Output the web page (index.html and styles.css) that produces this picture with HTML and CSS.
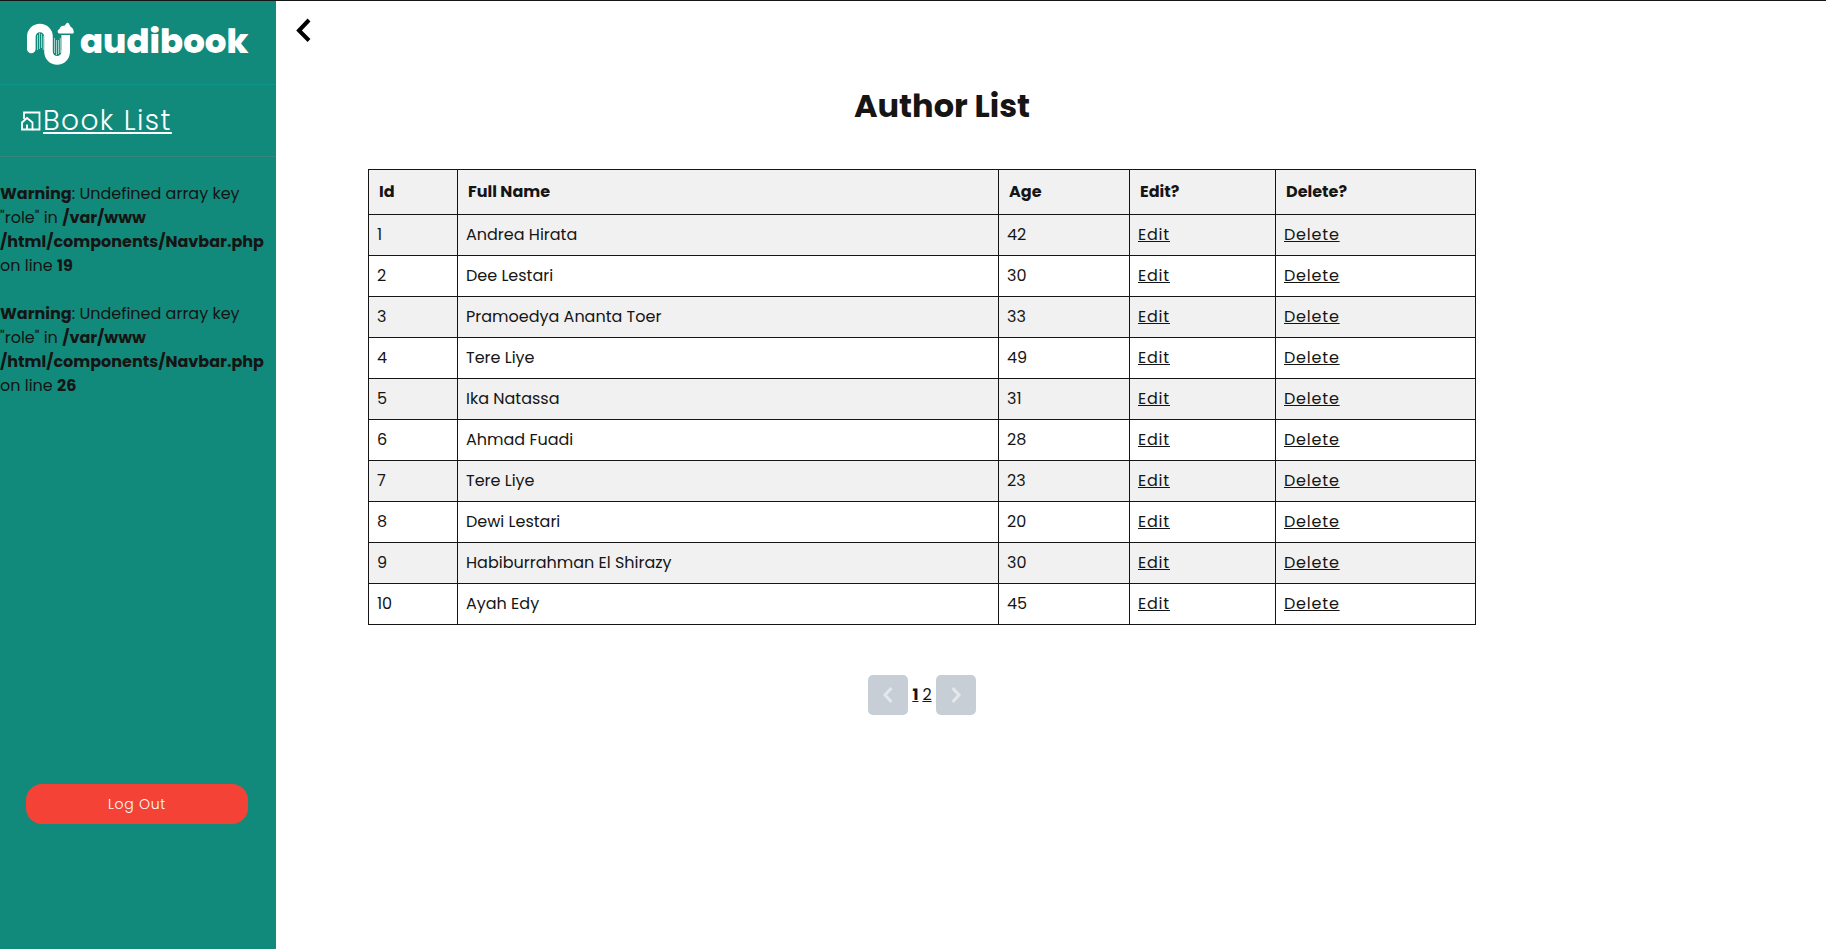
FILE: index.html
```html
<!DOCTYPE html>
<html lang="en">
<head>
<meta charset="utf-8">
<title>Author List</title>
<link rel="stylesheet" href="styles.css">
</head>
<body>
<div class="app">
  <aside class="sidebar">
    <div class="brand">
      <svg class="brand-mark" width="48" height="44" viewBox="26 22 48 44" fill="none" aria-hidden="true">
        <path d="M31.3 49V36.6a8.6 8.6 0 0 1 17.2 0V51.8a8.6 8.6 0 0 0 17.2 0" stroke="#fff" stroke-width="8.6" stroke-linecap="round"/>
        <path d="M65.7 52V35" stroke="#fff" stroke-width="8.6"/>
        <path d="M59.500 33.500a2 2 0 0 1-1.300-3.400l1.800-1.800c.2-2 2.200-3.100 4.500-2.500L66.500 23.200c.8-.8 2-.5 2.500.5l1.800 3.200c2 .5 2.800 3.300 3 5 .1 1-.5 1.600-1.500 1.600z" fill="#fff"/>
        <path d="M37.500 35v15M39.500 33v16M41.500 34v14M43.300 36v14M54.500 38v15M56.500 40v15M58.500 40v14M60.300 38v15" stroke="#fff" stroke-opacity=".6" stroke-width="1"/>
      </svg>
      <span class="brand-name">audibook</span>
    </div>
    <nav class="nav">
      <svg width="20" height="20" viewBox="0 0 20 20" fill="none" stroke="#fff" stroke-width="1.800" aria-hidden="true">
        <path d="M3 8V1.500h15.500v17h-7"/>
        <path d="M1 18.500v-7L6 7l5.500 4.500v7zM6 18v-4.500"/>
      </svg>
      <a class="nav-link" href="#">Book List</a>
    </nav>
    <p class="warning"><b>Warning</b>: Undefined array key<br>"role" in <b>/var/www<br>/html/components/Navbar.php</b><br>on line <b>19</b></p>
    <p class="warning"><b>Warning</b>: Undefined array key<br>"role" in <b>/var/www<br>/html/components/Navbar.php</b><br>on line <b>26</b></p>
    <button class="logout" type="button">Log Out</button>
  </aside>
  <main class="main">
    <button class="back" type="button" aria-label="Back">
      <svg width="16" height="24" viewBox="0 0 16 24" fill="none" stroke="#000" stroke-width="4"><path d="M13 2L3 12.500l10 10"/></svg>
    </button>
    <div class="content">
      <h1 class="title">Author List</h1>
      <table class="authors">
        <colgroup><col class="col-id"><col class="col-name"><col class="col-age"><col class="col-edit"><col class="col-delete"></colgroup>
        <thead><tr><th>Id</th><th>Full Name</th><th>Age</th><th>Edit?</th><th>Delete?</th></tr></thead>
        <tbody>
          <tr><td>1</td><td>Andrea Hirata</td><td>42</td><td><a href="#">Edit</a></td><td><a href="#">Delete</a></td></tr>
          <tr><td>2</td><td>Dee Lestari</td><td>30</td><td><a href="#">Edit</a></td><td><a href="#">Delete</a></td></tr>
          <tr><td>3</td><td>Pramoedya Ananta Toer</td><td>33</td><td><a href="#">Edit</a></td><td><a href="#">Delete</a></td></tr>
          <tr><td>4</td><td>Tere Liye</td><td>49</td><td><a href="#">Edit</a></td><td><a href="#">Delete</a></td></tr>
          <tr><td>5</td><td>Ika Natassa</td><td>31</td><td><a href="#">Edit</a></td><td><a href="#">Delete</a></td></tr>
          <tr><td>6</td><td>Ahmad Fuadi</td><td>28</td><td><a href="#">Edit</a></td><td><a href="#">Delete</a></td></tr>
          <tr><td>7</td><td>Tere Liye</td><td>23</td><td><a href="#">Edit</a></td><td><a href="#">Delete</a></td></tr>
          <tr><td>8</td><td>Dewi Lestari</td><td>20</td><td><a href="#">Edit</a></td><td><a href="#">Delete</a></td></tr>
          <tr><td>9</td><td>Habiburrahman El Shirazy</td><td>30</td><td><a href="#">Edit</a></td><td><a href="#">Delete</a></td></tr>
          <tr><td>10</td><td>Ayah Edy</td><td>45</td><td><a href="#">Edit</a></td><td><a href="#">Delete</a></td></tr>
        </tbody>
      </table>
      <nav class="pager" aria-label="Pages">
        <button type="button" class="pager-button" aria-label="Previous page" disabled>
          <svg width="12" height="16" viewBox="0 0 12 16" fill="none" stroke="#e4e7eb" stroke-width="3"><path d="M9.500 1L3 8l6.500 7"/></svg>
        </button>
        <a class="current" href="#">1</a>
        <a href="#">2</a>
        <button type="button" class="pager-button" aria-label="Next page" disabled>
          <svg width="12" height="16" viewBox="0 0 12 16" fill="none" stroke="#e4e7eb" stroke-width="3"><path d="M2.500 1L9 8l-6.500 7"/></svg>
        </button>
      </nav>
    </div>
  </main>
</div>
</body>
</html>
```
FILE: styles.css
```css
* { box-sizing: border-box; }
body {
  margin: 0;
  color: #151515;
  background: #fff;
  font: 16px/24px Poppins, Inter, sans-serif;
}
a { color: inherit; }
button { border: 0; padding: 0; font: inherit; }
.app {
  display: flex;
  min-height: 100vh;
  border-top: 1px solid #151515;
}
.sidebar {
  display: flex;
  flex-direction: column;
  flex: none;
  width: 276px;
  padding-bottom: 125px;
  background: #118a7b;
}
.brand {
  display: flex;
  align-items: flex-start;
  gap: 6px;
  height: 84px;
  padding: 21px 26px 0;
  border-bottom: 1px solid #0f968a;
}
.brand-mark { flex: none; }
.brand-name {
  color: #fff;
  font-size: 34px;
  font-weight: 800;
  line-height: 38px;
}
.nav {
  display: flex;
  align-items: center;
  gap: 2px;
  height: 72px;
  padding-left: 21px;
  border-bottom: 1px solid #33877f;
}
.nav-link {
  color: #fff;
  font-size: 28px;
  font-weight: 300;
  line-height: 40px;
  letter-spacing: 0.05em;
}
.warning { margin: 25px 0 0; white-space: nowrap; }
.warning + .warning { margin-top: 24px; }
.logout {
  height: 40px;
  margin: auto 28px 0 26px;
  border-radius: 16px;
  color: #fff;
  background: #f44336;
  font-size: 14px;
  font-weight: 300;
  letter-spacing: 0.05em;
}
.main { flex: 1; min-width: 0; }
.back {
  display: block;
  margin: 17px 0 0 20px;
  height: 24px;
  background: none;
}
.back svg { display: block; }
.content { padding: 40px 350px 40px 92px; }
.title {
  margin: 0 0 39px;
  padding-left: 40px;
  font-size: 32px;
  line-height: 48px;
  text-align: center;
}
.authors {
  width: 100%;
  table-layout: fixed;
  border-collapse: collapse;
}
.authors th, .authors td {
  border: 1px solid #151515;
  padding: 8px;
  text-align: left;
}
.authors th { padding: 10px; background: #f1f1f1; }
.authors tbody tr:nth-child(odd) { background: #f1f1f1; }
.authors a { letter-spacing: 0.05em; }
.col-id { width: 89px; }
.col-age { width: 131px; }
.col-edit { width: 146px; }
.col-delete { width: 200px; }
.pager {
  display: flex;
  justify-content: center;
  align-items: center;
  gap: 4px;
  margin-top: 50px;
}
.pager .current { font-weight: 700; }
.pager-button {
  display: flex;
  align-items: center;
  justify-content: center;
  width: 40px;
  height: 40px;
  border-radius: 5px;
  background: #c8ced6;
}
```
